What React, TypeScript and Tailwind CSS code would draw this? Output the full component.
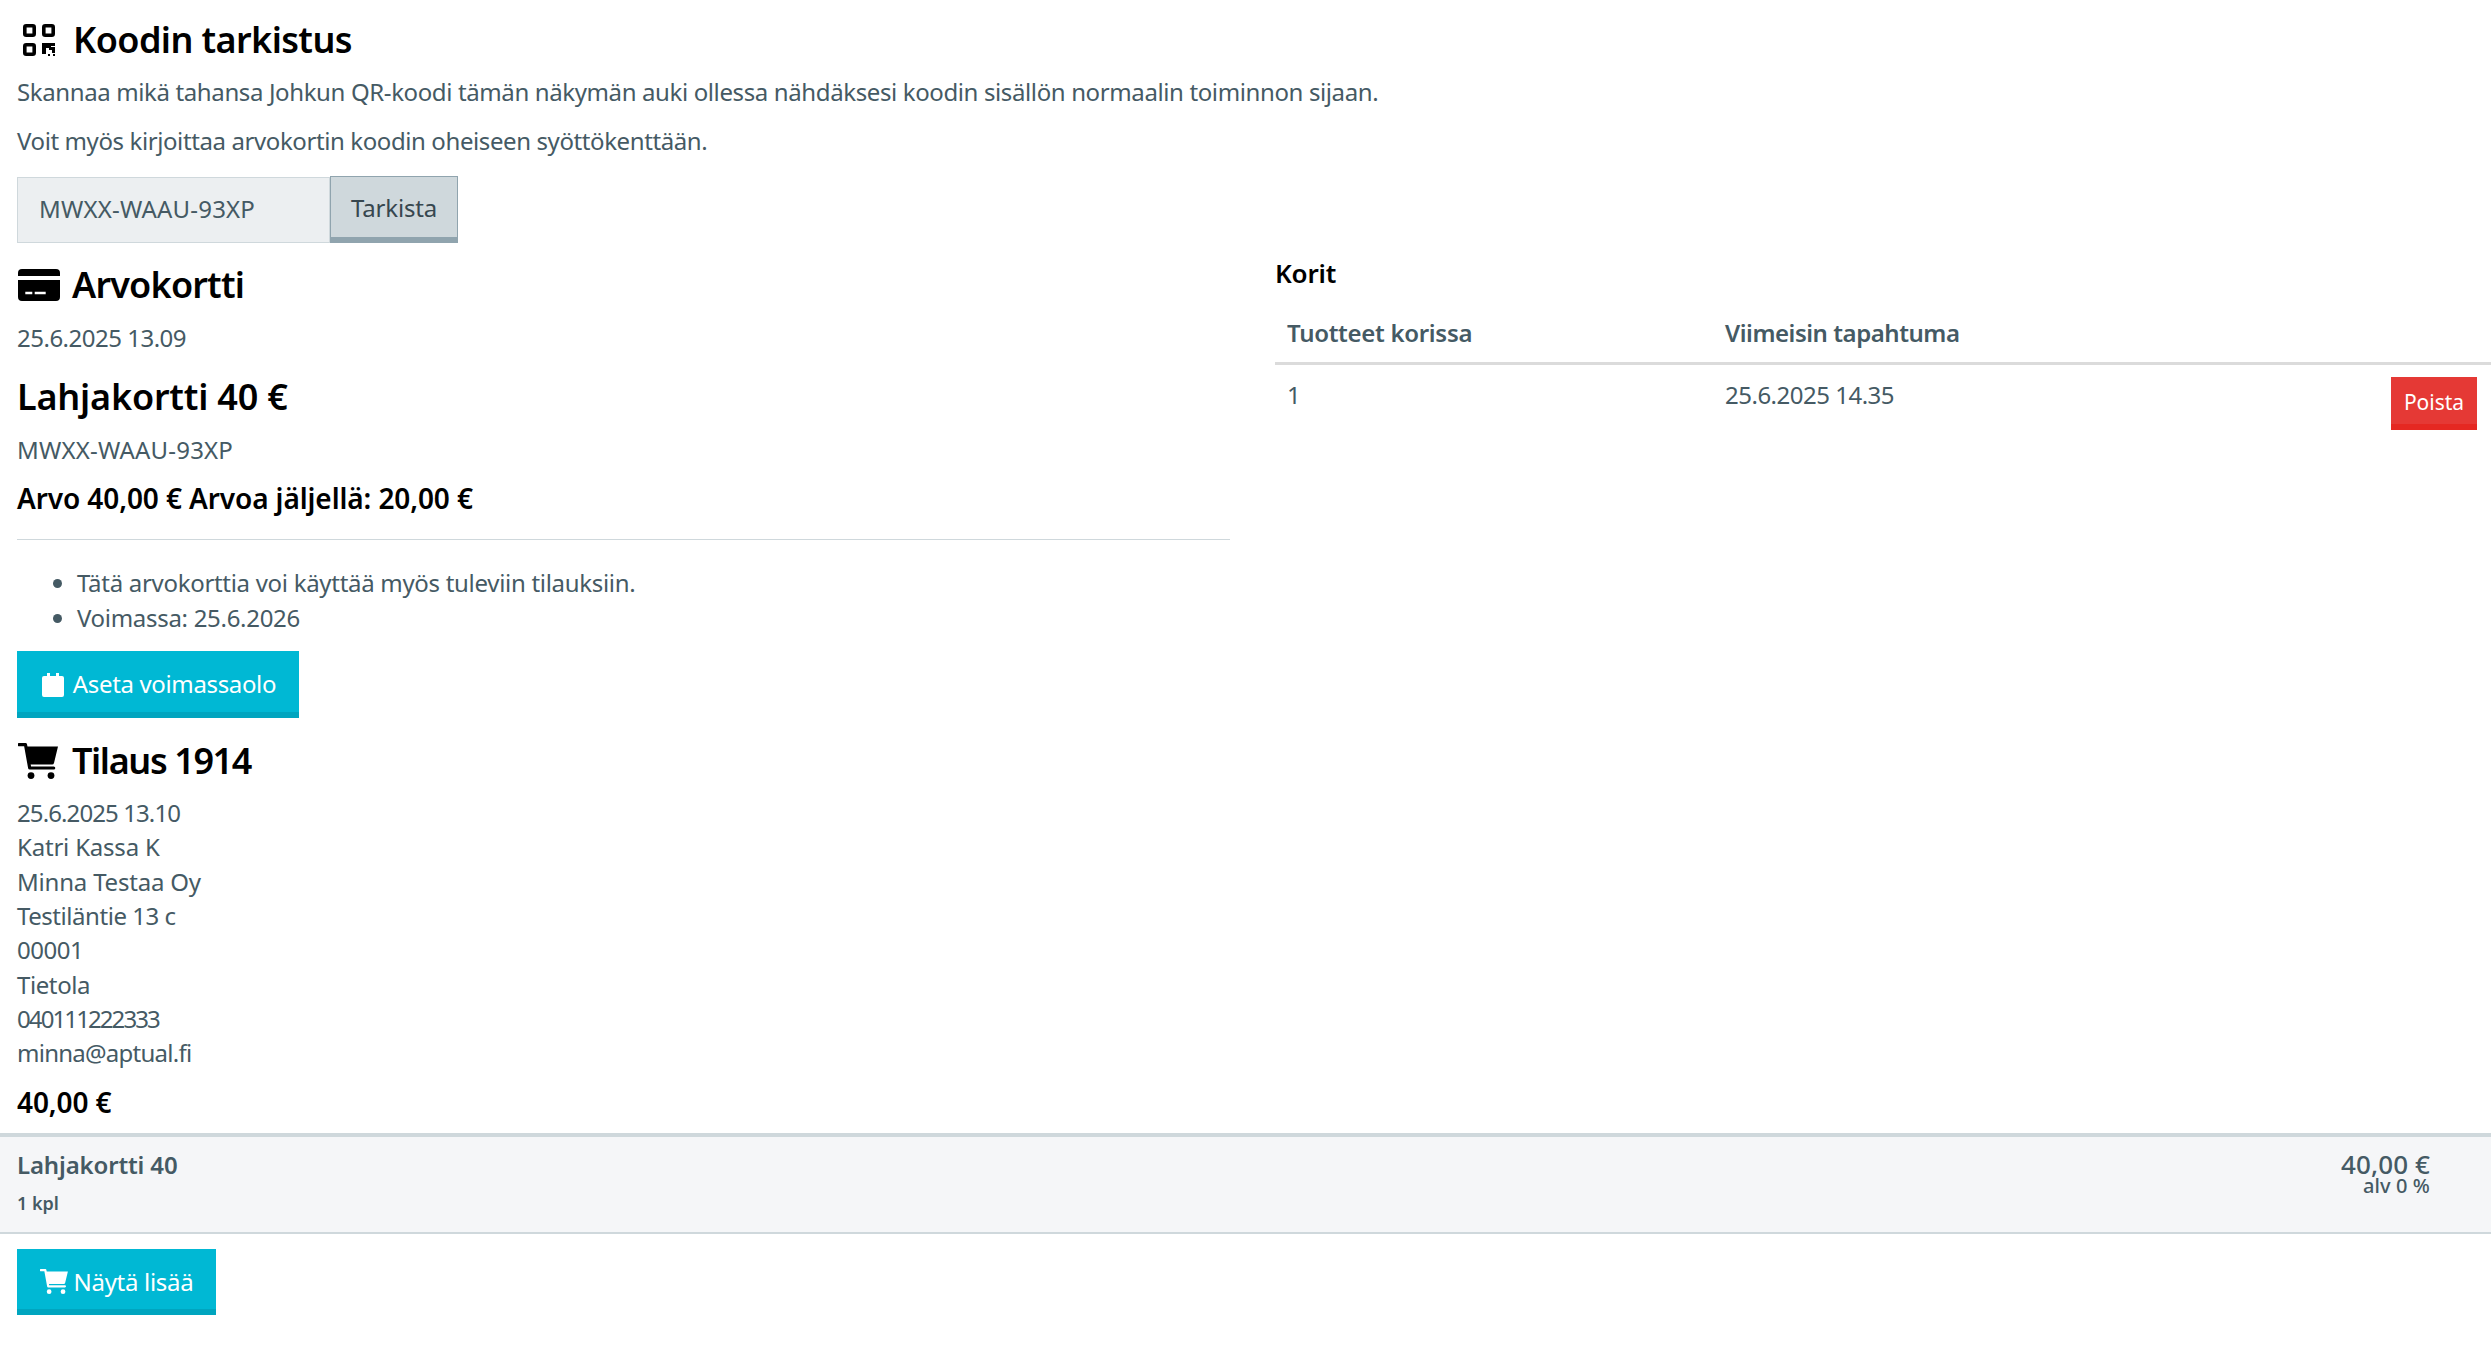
const addr: [string, string][] = [
  ["25.6.2025 13.10", "tracking-[-0.9px]"],
  ["Katri Kassa K", "tracking-[-0.2px]"],
  ["Minna Testaa Oy", "tracking-[-0.2px]"],
  ["Testiläntie 13 c", "tracking-[-0.45px]"],
  ["00001", "tracking-[-0.5px]"],
  ["Tietola", "tracking-[-0.4px]"],
  ["040111222333", "tracking-[-1.9px]"],
  ["minna@aptual.fi", "tracking-[-0.75px]"],
];

function QrIcon() {
  return (
    <svg viewBox="0 0 32 32" className="h-[32px] w-[32px] shrink-0" fill="none" stroke="currentColor" strokeWidth="3.6">
      <rect x="1.8" y="1.8" width="9.4" height="9.4" rx="1.4" />
      <rect x="20.8" y="1.8" width="9.4" height="9.4" rx="1.4" />
      <rect x="1.8" y="20.8" width="9.4" height="9.4" rx="1.4" />
      <path d="M19 19h9v4h4v6h-3v-3h-3v-2h-3v6h-4zM28 19h4v3h-4zM25 30h2v2h-2zM30 30h2v2h-2z" fill="currentColor" stroke="none" />
    </svg>
  );
}

function CardIcon() {
  return (
    <svg viewBox="0 0 42 32" className="h-[32px] w-[42px] shrink-0" fill="currentColor">
      <path d="M4 0h34a4 4 0 0 1 4 4v3H0V4a4 4 0 0 1 4-4z" />
      <path fillRule="evenodd" d="M0 11h42v17a4 4 0 0 1-4 4H4a4 4 0 0 1-4-4zM7.3 22.7v2.6h7v-2.6zM16.7 22.7v2.6h11v-2.6z" />
    </svg>
  );
}

function CartIcon({ className }: { className: string }) {
  return (
    <svg viewBox="0 0 40 36" className={className} fill="currentColor">
      <path d="M8 3.5h32l-4 16.5a2 2 0 0 1-2 1.5H11z" />
      <path d="M1 1.7h6.5l4.2 23.3h24" fill="none" stroke="currentColor" strokeWidth="3.2" strokeLinecap="round" strokeLinejoin="round" />
      <circle cx="13" cy="32.6" r="3.4" />
      <circle cx="33" cy="32.6" r="3.4" />
    </svg>
  );
}

function CalendarIcon() {
  return (
    <svg viewBox="0 0 22 24" className="h-[24px] w-[22px] shrink-0" fill="currentColor">
      <path d="M5 0h3v3h6V0h3v3h3a2 2 0 0 1 2 2v17a2 2 0 0 1-2 2H2a2 2 0 0 1-2-2V5a2 2 0 0 1 2-2h3z" />
    </svg>
  );
}

export default function App() {
  return (
    <div className="min-h-[1371px] bg-white font-['Noto_Sans',sans-serif] text-[24px] leading-[34.3px] text-[#455a64]">
      <div className="px-[17px] pt-[16px]">
        <h1 className="flex h-[48px] items-center text-[36px] font-semibold leading-[48px] tracking-[-0.6px] text-black">
          <span className="flex w-[56px] shrink-0 pl-[6px]"><QrIcon /></span>
          <span>Koodin tarkistus</span>
        </h1>
        <p className="mt-[11px] tracking-[-0.38px]">Skannaa mikä tahansa Johkun QR-koodi tämän näkymän auki ollessa nähdäksesi koodin sisällön normaalin toiminnon sijaan.</p>
        <p className="mt-[15px] tracking-[-0.4px]">Voit myös kirjoittaa arvokortin koodin oheiseen syöttökenttään.</p>
        <div className="mt-[17px] flex h-[67px]">
          <div className="mt-[1px] flex w-[313px] items-center border border-[#cfd8dc] bg-[#eceff1] pl-[21px] tracking-[0.2px]">MWXX-WAAU-93XP</div>
          <button className="w-[128px] border border-b-[6px] border-[#90a4ae] bg-[#cfd8dc] pt-[3px] text-center tracking-[-0.2px] text-[#37474f]">Tarkista</button>
        </div>
      </div>
      <div className="flex">
        <div className="w-[1247px] shrink-0 px-[17px]">
          <h2 className="mt-[18px] flex h-[48px] items-center text-[36px] font-semibold leading-[48px] tracking-[-0.8px] text-black">
            <span className="flex w-[55px] shrink-0 pl-[1px]"><CardIcon /></span>
            <span>Arvokortti</span>
          </h2>
          <p className="mt-[12px] tracking-[-0.5px]">25.6.2025 13.09</p>
          <h3 className="mt-[18px] text-[36px] font-semibold leading-[48px] tracking-[-0.2px] text-black">Lahjakortti 40 €</h3>
          <p className="mt-[12px] tracking-[0.2px]">MWXX-WAAU-93XP</p>
          <p className="mt-[14px] text-[28px] font-semibold tracking-[-0.1px] text-black">Arvo 40,00 € Arvoa jäljellä: 20,00 €</p>
          <hr className="mt-[24px] border-0 border-t border-[#cfd8dc]" />
          <ul className="mt-[26px] list-disc pl-[60px]">
            <li className="tracking-[-0.3px]">Tätä arvokorttia voi käyttää myös tuleviin tilauksiin.</li>
            <li className="tracking-[-0.3px]">Voimassa: 25.6.2026</li>
          </ul>
          <button className="mt-[16px] flex h-[67px] w-[282px] items-center justify-center gap-[9px] border-b-[6px] border-[#00a5bf] bg-[#00b8d4] pl-[2px] pt-[6px] tracking-[-0.35px] text-white">
            <CalendarIcon />
            <span>Aseta voimassaolo</span>
          </button>
          <h2 className="mt-[19px] flex h-[48px] items-center text-[36px] font-semibold leading-[48px] tracking-[-1.4px] text-black">
            <span className="flex w-[55px] shrink-0 pl-[1px]"><CartIcon className="h-[36px] w-[40px]" /></span>
            <span>Tilaus 1914</span>
          </h2>
          <div className="mt-[11px]">
            {addr.map(([a, t]) => (
              <div key={a} className={t}>{a}</div>
            ))}
          </div>
          <p className="mt-[15px] text-[28px] font-semibold tracking-[-0.1px] text-black">40,00 €</p>
        </div>
        <div className="min-w-0 flex-1 pl-[28px]">
          <h4 className="mt-[6px] text-[26px] font-semibold leading-[48px] tracking-[-0.2px] text-black">Korit</h4>
          <table className="mt-[14px] w-full border-collapse text-left">
            <thead>
              <tr className="border-b-[3px] border-[#dbdbdb]">
                <th className="h-[53px] w-[438px] pb-[6px] pl-[12px] font-semibold tracking-[-0.3px]">Tuotteet korissa</th>
                <th className="pb-[6px] pl-[12px] font-semibold tracking-[-0.45px]">Viimeisin tapahtuma</th>
                <th />
              </tr>
            </thead>
            <tbody>
              <tr>
                <td className="pl-[12px] pt-[13px] align-top">1</td>
                <td className="pl-[12px] pt-[13px] align-top tracking-[-0.5px]">25.6.2025 14.35</td>
                <td className="pr-[14px] pt-[12px] text-right align-top">
                  <button className="h-[53px] w-[86px] border-b-[6px] border-[#e52822] bg-[#e53935] pt-[4px] text-[21px] text-white">Poista</button>
                </td>
              </tr>
            </tbody>
          </table>
        </div>
      </div>
      <div className="mt-[13px] flex h-[101px] items-start justify-between border-t-[4px] border-b-[2px] border-[#cfd8dc] bg-[#f5f6f8] px-[17px] pt-[11px]">
        <div>
          <div className="font-semibold tracking-[-0.15px]">Lahjakortti 40</div>
          <div className="mt-[9px] text-[18px] font-semibold leading-[24px]">1 kpl</div>
        </div>
        <div className="mr-[44px] text-right">
          <div className="pt-[3px] text-[26px] font-medium leading-[26px] tracking-[0.1px]">40,00 €</div>
          <div className="text-[20px] font-medium leading-[18px] tracking-[0.1px]">alv 0 %</div>
        </div>
      </div>
      <div className="px-[17px] pt-[15px]">
        <button className="flex h-[66px] w-[199px] items-center justify-center gap-[6px] border-b-[6px] border-[#00a5bf] bg-[#00b8d4] pt-[6px] tracking-[-0.3px] text-white">
          <CartIcon className="h-[25px] w-[28px] shrink-0" />
          <span>Näytä lisää</span>
        </button>
      </div>
    </div>
  );
}
